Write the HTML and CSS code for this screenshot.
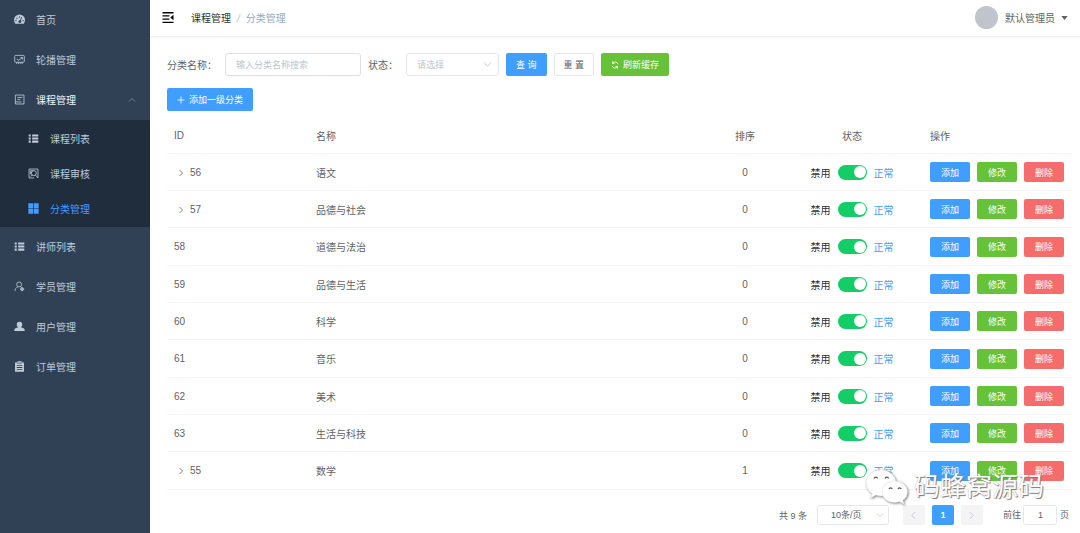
FILE: index.html
```
<!DOCTYPE html>
<html lang="zh-CN">
<head>
    <meta charset="UTF-8">
    <title>分类管理</title>
    <link rel="stylesheet" href="styles.css">
</head>
<body>
    <svg class="sprite" aria-hidden="true">
        <symbol id="i-list" viewBox="0 0 16 16">
            <path fill="currentColor" d="M1 2h3v3H1zM6 2h9v3H6zM1 6.7h3v2.6H1zM6 6.7h9v2.6H6zM1 11h3v3H1zM6 11h9v3H6z"/>
        </symbol>
        <symbol id="i-right" viewBox="0 0 16 16">
            <path fill="none" stroke="currentColor" stroke-width="1.6" d="M5 2l6 6-6 6"/>
        </symbol>
        <symbol id="i-left" viewBox="0 0 16 16">
            <path fill="none" stroke="currentColor" stroke-width="1.6" d="M11 2L5 8l6 6"/>
        </symbol>
        <symbol id="i-down" viewBox="0 0 16 16">
            <path fill="none" stroke="currentColor" stroke-width="1.5" d="M2 5l6 6 6-6"/>
        </symbol>
    </svg>

    <div class="app">
        <nav class="sidebar">
            <a class="item" href="#">
                <svg class="icon" viewBox="0 0 16 16"><path fill="currentColor" fill-rule="evenodd" d="M2 14a8 8 0 1 1 12 0zM8 3.2a1 1 0 1 0 0 2 1 1 0 0 0 0-2zM4.2 5a1 1 0 1 0 0 2 1 1 0 0 0 0-2zM2.8 8.7a1 1 0 1 0 0 2 1 1 0 0 0 0-2zM13.2 8.7a1 1 0 1 0 0 2 1 1 0 0 0 0-2zM10.8 4.5L8.6 9a2 2 0 1 0 1.3.5l1.9-4.5z"/></svg>
                <span>首页</span>
            </a>
            <a class="item" href="#">
                <svg class="icon" viewBox="0 0 16 16" fill="none" stroke="currentColor" stroke-width="1.2"><rect x="1" y="2" width="14" height="10" rx="1.5"/><path d="M4 7.5l3 1.5 5-3.500M9.500 5h3v3M4 12v2.500M6.700 12v2.500M9.300 12v2.500M12 12v2.500"/></svg>
                <span>轮播管理</span>
            </a>
            <a class="item open" href="#">
                <svg class="icon" viewBox="0 0 16 16" fill="none" stroke="currentColor" stroke-width="1.2"><path d="M2 1.5h12.500v13H2zM2 11.500h9M5 5h7M5 8h4"/></svg>
                <span>课程管理</span>
                <svg class="arrow" viewBox="0 0 16 16"><path fill="none" stroke="currentColor" stroke-width="1.4" d="M2 11l6-6 6 6"/></svg>
            </a>
            <div class="submenu">
                <a class="item" href="#">
                    <svg class="icon"><use href="#i-list"/></svg>
                    <span>课程列表</span>
                </a>
                <a class="item" href="#">
                    <svg class="icon" viewBox="0 0 16 16" fill="none" stroke="currentColor" stroke-width="1.2"><path d="M9 14.5H1.5v-13h13v13M3.5 9V4h4"/><circle cx="8.5" cy="7.5" r="3.7"/><path d="M11 10.5l3.500 4M6 10l-2 2.500"/></svg>
                    <span>课程审核</span>
                </a>
                <a class="item current" href="#">
                    <svg class="icon" viewBox="0 0 16 16"><path fill="currentColor" d="M.5.5h7v7h-7zM8.500.5h7v7h-7zM.5 8.500h7v7h-7zM8.500 8.500h7v7h-7z"/></svg>
                    <span>分类管理</span>
                </a>
            </div>
            <a class="item" href="#">
                <svg class="icon"><use href="#i-list"/></svg>
                <span>讲师列表</span>
            </a>
            <a class="item" href="#">
                <svg class="icon" viewBox="0 0 16 16" fill="none" stroke="currentColor" stroke-width="1.2"><circle cx="7.5" cy="5" r="3.6"/><path d="M1.5 14.5c0-3 1.500-5 4-6M9.500 8.300l1.500 1"/><circle cx="11.8" cy="11.8" r="2"/><path d="M11.8 8.800v6M8.800 11.800h6"/></svg>
                <span>学员管理</span>
            </a>
            <a class="item" href="#">
                <svg class="icon" viewBox="0 0 16 16"><path fill="currentColor" d="M8 1a4 4 0 0 1 4 4c0 2-1 3.500-2 4 3 .5 5.500 2 5.500 4v1.500H.5V13C.5 11 3 9.500 6 9 5 8.500 4 7 4 5a4 4 0 0 1 4-4z"/></svg>
                <span>用户管理</span>
            </a>
            <a class="item" href="#">
                <svg class="icon" viewBox="0 0 16 16"><path fill="currentColor" fill-rule="evenodd" d="M1.5 2H5V.5h6V2h3.500v13.500h-13zM5 2.500v1.300h6V2.500zM4 6v1.300h8V6zM4 8.800v1.300h8V8.800zM4 11.600v1.300h8v-1.300z"/></svg>
                <span>订单管理</span>
            </a>
        </nav>

        <main class="main">
            <header class="navbar">
                <button class="fold" type="button" aria-label="收起菜单">
                    <svg viewBox="0 0 14 12"><path fill="currentColor" d="M1 0h12v1.500H1zM1 3.500h7.500V5H1zM1 7h7.500v1.500H1zM1 10.500h12V12H1zM13 3v6L9.500 6z"/></svg>
                </button>
                <div class="breadcrumb">
                    <a href="#">课程管理</a><i>/</i><span>分类管理</span>
                </div>
                <div class="user">
                    <span class="avatar"></span>
                    <span>默认管理员</span>
                    <svg class="caret" viewBox="0 0 8 5"><path fill="currentColor" d="M0 0h8L4 5z"/></svg>
                </div>
            </header>

            <section class="content">
                <form class="filter">
                    <label class="name-label" for="name">分类名称：</label>
                    <input class="box name" type="text" id="name" placeholder="输入分类名称搜索">
                    <label class="status-label" for="status">状态：</label>
                    <span class="select">
                        <select class="box" id="status">
                            <option>请选择</option>
                        </select>
                        <svg><use href="#i-down"/></svg>
                    </span>
                    <button class="btn primary" type="button">查 询</button>
                    <button class="btn plain" type="button">重 置</button>
                    <button class="btn success" type="button">
                        <svg viewBox="0 0 16 16"><path fill="none" stroke="currentColor" stroke-width="1.6" d="M14 6.500A6.200 6.200 0 0 0 3 4.500M2 9.500a6.200 6.200 0 0 0 11 2M3 1v4h4M13 15v-4H9"/></svg>刷新缓存
                    </button>
                </form>
                <button class="btn primary add" type="button">
                    <svg viewBox="0 0 16 16"><path fill="none" stroke="currentColor" stroke-width="1.6" d="M8 1v14M1 8h14"/></svg>添加一级分类
                </button>

                <table>
                    <thead>
                        <tr>
                            <th class="c-id">ID</th>
                            <th>名称</th>
                            <th class="c-sort">排序</th>
                            <th class="c-status">状态</th>
                            <th class="c-ops">操作</th>
                        </tr>
                    </thead>
                    <tbody id="rows"></tbody>
                </table>

                <div class="pager">
                    <span class="total">共 9 条</span>
                    <span class="select size">
                        <select class="box" aria-label="每页条数">
                            <option>10条/页</option>
                        </select>
                        <svg><use href="#i-down"/></svg>
                    </span>
                    <button class="page" type="button" aria-label="上一页" disabled><svg><use href="#i-left"/></svg></button>
                    <button class="page active" type="button">1</button>
                    <button class="page" type="button" aria-label="下一页" disabled><svg><use href="#i-right"/></svg></button>
                    <label class="jump">前往 <input class="box" type="text" value="1"> 页</label>
                </div>
            </section>
        </main>

        <div class="watermark">
            <svg viewBox="0 0 44 36" fill="#fff" stroke="#d8d8d8" stroke-width="0.5">
                <path d="M16 1C7.500 1 1 6.800 1 14c0 4.500 2.300 8 6 10.500L5.500 29l5.500-3c2 .6 3.500 1 5.500 1C25 27 31 21.200 31 14S24.500 1 16 1z"/>
                <path d="M29.500 12C22.500 12 17 16.700 17 22.700s5.500 10.800 12.500 10.800c1.700 0 3.300-.3 4.700-.8l5 2.600-1.400-4c2.900-2 4.700-5 4.700-8.600C42.500 16.700 36.500 12 29.500 12z"/>
                <path fill="none" stroke="#555" stroke-width="1.2" d="M9 9.500c.6-1.800 3-1.800 3.600 0M20 9.500c.6-1.800 3-1.800 3.600 0M24 20c.5-1.600 2.700-1.600 3.200 0M33 20c.5-1.600 2.700-1.600 3.200 0"/>
            </svg>
            <span>码蜂窝源码</span>
        </div>
    </div>

    <script>
        const list = [
            { id: 56, name: "语文", sort: 0, children: true },
            { id: 57, name: "品德与社会", sort: 0, children: true },
            { id: 58, name: "道德与法治", sort: 0 },
            { id: 59, name: "品德与生活", sort: 0 },
            { id: 60, name: "科学", sort: 0 },
            { id: 61, name: "音乐", sort: 0 },
            { id: 62, name: "美术", sort: 0 },
            { id: 63, name: "生活与科技", sort: 0 },
            { id: 55, name: "数学", sort: 1, children: true }
        ];
        const expand = '<button class="expand" type="button" aria-label="展开"><svg><use href="#i-right"/></svg></button>';

        document.getElementById("rows").innerHTML = list.map(row => `
            <tr>
                <td>${row.children ? expand : ""}${row.id}</td>
                <td>${row.name}</td>
                <td class="c-sort">${row.sort}</td>
                <td class="c-status">
                    <label class="status"><span>禁用</span><input class="switch" type="checkbox" checked><b>正常</b></label>
                </td>
                <td>
                    <div class="ops">
                        <button class="btn mini primary" type="button">添加</button>
                        <button class="btn mini success" type="button">修改</button>
                        <button class="btn mini danger" type="button">删除</button>
                    </div>
                </td>
            </tr>`).join("");
    </script>
</body>
</html>
```

FILE: styles.css
```
* {
    box-sizing: border-box;
}
body {
    margin: 0;
    font-family: "Liberation Sans", "Noto Sans CJK SC", sans-serif;
    font-size: 10px;
    color: #606266;
    background-color: #fff;
}
a {
    color: inherit;
    text-decoration: none;
}
button, input, select {
    margin: 0;
    padding: 0;
    font-family: inherit;
    font-size: 9px;
    color: inherit;
}
button {
    border: none;
    background: none;
    cursor: pointer;
}
.sprite {
    display: none;
}
.app {
    position: relative;
    display: flex;
    min-height: 100vh;
}

/* sidebar */
.sidebar {
    flex: 0 0 150px;
    background-color: #304156;
    color: #bfcbd9;
}
.item {
    display: flex;
    align-items: center;
    gap: 11px;
    height: 40px;
    padding: 0 14px 1px;
}
.icon {
    width: 11px;
    height: 11px;
}
.item.open span {
    color: #f4f4f5;
}
.arrow {
    width: 8px;
    height: 8px;
    margin-left: auto;
    color: #909399;
}
.submenu {
    padding: 1px 0;
    background-color: #1f2d3d;
}
.submenu .item {
    height: 35px;
    padding-left: 28px;
}
.submenu .current {
    color: #409eff;
}

/* top bar */
.main {
    flex: 1;
    min-width: 0;
}
.navbar {
    display: flex;
    align-items: center;
    height: 36px;
    padding: 0 12px 1px 11px;
    box-shadow: 0 1px 2px rgba(0, 21, 41, 0.1);
}
.fold {
    display: flex;
    color: #000;
}
.fold svg {
    width: 14px;
    height: 11px;
}
.breadcrumb {
    margin-left: 16px;
    color: #97a8be;
}
.breadcrumb a {
    color: #303133;
}
.breadcrumb i {
    margin: 0 6px;
    color: #c0c4cc;
}
.user {
    display: flex;
    align-items: center;
    margin-left: auto;
}
.avatar {
    width: 23px;
    height: 23px;
    margin-right: 7px;
    border-radius: 50%;
    background-color: #c0c4cc;
}
.caret {
    width: 7px;
    height: 4px;
    margin-left: 6px;
}

/* search form */
.content {
    padding: 17px 8px 7px 17px;
}
.filter {
    display: flex;
    align-items: center;
    gap: 7px;
    margin-bottom: 12px;
}
.name-label {
    width: 51px;
}
.status-label {
    width: 31px;
}
.box {
    height: 23px;
    border: 1px solid #dcdfe6;
    border-radius: 3px;
    background-color: #fff;
    outline: none;
}
.name {
    width: 136px;
    padding: 0 10px;
}
.name::placeholder {
    color: #c0c4cc;
}
.select {
    position: relative;
    display: flex;
    width: 93px;
}
.select select {
    width: 100%;
    padding: 0 10px;
    border-color: #e4e7ed;
    appearance: none;
    color: #c0c4cc;
}
.select svg {
    position: absolute;
    top: 7px;
    right: 7px;
    width: 9px;
    height: 9px;
    color: #c0c4cc;
    pointer-events: none;
}
.btn {
    display: inline-flex;
    align-items: center;
    justify-content: center;
    height: 23px;
    padding: 0 9px;
    border: 1px solid transparent;
    border-radius: 2px;
    color: #fff;
    white-space: nowrap;
}
.btn svg {
    width: 8px;
    height: 8px;
    margin-right: 4px;
}
.primary {
    background-color: #409eff;
}
.success {
    background-color: #67c23a;
}
.danger {
    background-color: #f56c6c;
}
.plain {
    border-color: #e4e7ed;
    color: #606266;
}

/* category table */
table {
    width: 100%;
    margin-top: 7px;
    table-layout: fixed;
    border-collapse: separate;
    border-spacing: 0;
}
th, td {
    height: 37px;
    padding: 0 7px;
    border-bottom: 1px solid #f0f2f5;
    font-weight: normal;
    text-align: left;
}
th {
    height: 36px;
}
tr:nth-child(3n) td {
    height: 38px;
}
.c-id {
    width: 142px;
}
.c-sort {
    width: 72px;
    text-align: center;
}
.c-status {
    width: 142px;
    text-align: center;
}
.c-ops {
    width: 149px;
}
.expand {
    width: 16px;
    vertical-align: middle;
}
.expand svg {
    display: block;
    width: 8px;
    height: 8px;
    margin-left: 3px;
}
.status {
    display: inline-flex;
    align-items: center;
    gap: 7px;
    color: #303133;
    vertical-align: middle;
}
.status b {
    font-weight: normal;
    color: #409eff;
}
.switch {
    display: flex;
    align-items: center;
    width: 29px;
    height: 15px;
    padding: 0 1px;
    border-radius: 8px;
    background-color: #dcdfe6;
    appearance: none;
}
.switch::before {
    content: "";
    width: 12px;
    height: 12px;
    border-radius: 50%;
    background-color: #fff;
}
.switch:checked {
    justify-content: flex-end;
    background-color: #13ce66;
}
.ops {
    display: flex;
    gap: 7px;
}
.mini {
    width: 40px;
    height: 20px;
    padding: 0;
}

/* pagination */
.pager {
    display: flex;
    align-items: center;
    justify-content: flex-end;
    gap: 7px;
    margin-top: 15px;
    padding-right: 3px;
    font-size: 9px;
}
.pager .box {
    height: 20px;
    border-color: #e4e7ed;
}
.size {
    width: 72px;
    margin: 0 7px 0 3px;
}
.size select {
    padding-left: 13px;
    color: #606266;
}
.size svg {
    top: 6px;
    right: 5px;
    width: 8px;
    height: 8px;
}
.page {
    display: flex;
    align-items: center;
    justify-content: center;
    width: 22px;
    height: 20px;
    border-radius: 2px;
    background-color: #f4f4f5;
    color: #c0c4cc;
}
.page svg {
    width: 9px;
    height: 9px;
}
.page.active {
    background-color: #409eff;
    color: #fff;
    font-weight: bold;
}
.jump {
    margin-left: 13px;
}
.jump input {
    width: 34px;
    text-align: center;
}

/* watermark over the bottom right corner */
.watermark {
    position: absolute;
    right: 36px;
    bottom: 28px;
    display: flex;
    align-items: center;
    gap: 5px;
    font-size: 26px;
    line-height: 36px;
    color: #fff;
    text-shadow: 1px 1px 1px #777, 0 0 1px #aaa;
    pointer-events: none;
}
.watermark svg {
    width: 44px;
    height: 36px;
    filter: drop-shadow(1px 1px 1px #888);
}
```
